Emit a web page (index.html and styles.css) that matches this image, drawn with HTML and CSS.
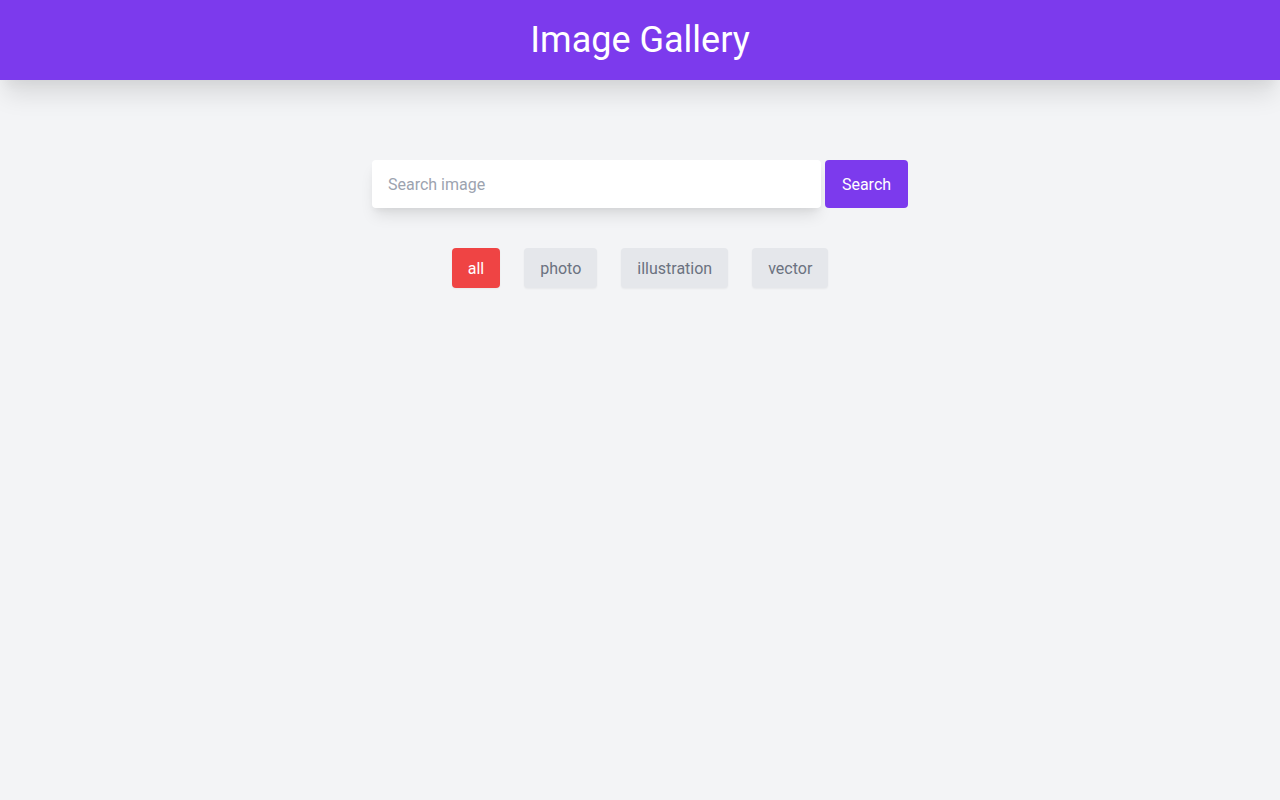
FILE: index.html
```html
<!DOCTYPE html>
<html lang="en">
<head>
<meta charset="utf-8">
<title>Image Gallery</title>
<link rel="stylesheet" href="styles.css">
</head>
<body>
<header class="header">
  <h1 class="title">Image Gallery</h1>
</header>
<main class="main">
  <form class="search">
    <input class="search-input" type="text" placeholder="Search image">
    <button class="search-btn" type="button">Search</button>
  </form>
  <div class="filters">
    <button class="filter active" type="button">all</button>
    <button class="filter" type="button">photo</button>
    <button class="filter" type="button">illustration</button>
    <button class="filter" type="button">vector</button>
  </div>
</main>
</body>
</html>
```

FILE: styles.css
```css
* { box-sizing: border-box; }
html, body { margin: 0; padding: 0; }
body {
  background: #f3f4f6;
  font-family: Roboto, "Noto Sans", sans-serif;
  min-height: 100vh;
}
.header {
  height: 80px;
  background: #7c3aed;
  display: flex;
  align-items: center;
  justify-content: center;
  box-shadow: 0 20px 25px -5px rgba(0,0,0,0.1), 0 10px 10px -5px rgba(0,0,0,0.04);
  position: relative;
}
.title {
  margin: 0;
  color: #fff;
  font-size: 36px;
  font-weight: 400;
  line-height: 40px;
}
.main {
  padding-top: 80px;
  display: flex;
  flex-direction: column;
  align-items: center;
}
.search {
  display: flex;
  gap: 4px;
  margin: 0;
}
.search-input {
  width: 449px;
  height: 48px;
  border: none;
  border-radius: 4px;
  background: #fff;
  padding: 0 16px;
  font-family: inherit;
  font-size: 16px;
  color: #374151;
  box-shadow: 0 10px 15px -3px rgba(0,0,0,0.1), 0 4px 6px -2px rgba(0,0,0,0.05);
  outline: none;
}
.search-input::placeholder { color: #9ca3af; }
.search-btn {
  width: 83px;
  height: 48px;
  border: none;
  border-radius: 4px;
  background: #7c3aed;
  color: #fff;
  font-family: inherit;
  font-size: 16px;
  padding: 0 16px;
}
.filters {
  margin-top: 40px;
  display: flex;
  gap: 24px;
}
.filter {
  height: 40px;
  padding: 0 16px;
  border: none;
  border-radius: 4px;
  background: #e5e7eb;
  color: #6b7280;
  font-family: inherit;
  font-size: 16px;
  box-shadow: 0 1px 2px 0 rgba(0,0,0,0.05);
}
.filter.active {
  background: #ef4444;
  color: #fff;
}
```
